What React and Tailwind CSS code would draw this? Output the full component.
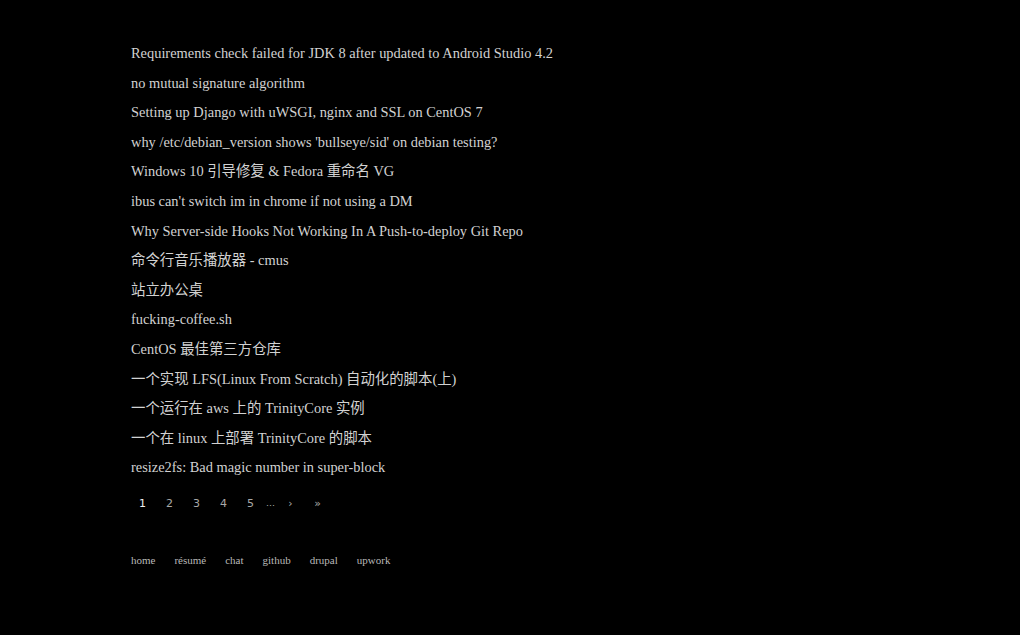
const posts = [
  "Requirements check failed for JDK 8 after updated to Android Studio 4.2",
  "no mutual signature algorithm",
  "Setting up Django with uWSGI, nginx and SSL on CentOS 7",
  "why /etc/debian_version shows 'bullseye/sid' on debian testing?",
  "Windows 10 引导修复 & Fedora 重命名 VG",
  "ibus can't switch im in chrome if not using a DM",
  "Why Server-side Hooks Not Working In A Push-to-deploy Git Repo",
  "命令行音乐播放器 - cmus",
  "站立办公桌",
  "fucking-coffee.sh",
  "CentOS 最佳第三方仓库",
  "一个实现 LFS(Linux From Scratch) 自动化的脚本(上)",
  "一个运行在 aws 上的 TrinityCore 实例",
  "一个在 linux 上部署 TrinityCore 的脚本",
  "resize2fs: Bad magic number in super-block",
];

const links = ["home", "résumé", "chat", "github", "drupal", "upwork"];

export default function App() {
  return (
    <div className="min-h-[635px] w-full bg-black pl-[131px] pt-[39px] font-['Liberation_Serif','Noto_Sans_CJK_SC',serif]">
      <ul className="flex flex-col">
        {posts.map((p) => (
          <li key={p} className="h-[29.6px] leading-[29.6px] text-[14.4px] text-[#d2d2d2] whitespace-nowrap">
            <a href="#">{p}</a>
          </li>
        ))}
      </ul>

      <div className="-ml-[2px] mt-[6px] flex h-[30px] items-center text-[11px] font-['DejaVu_Sans',sans-serif] text-[#a8a8a8]">
        <span className="w-[27px] text-center text-[#f0f0f0]">1</span>
        <span className="w-[27px] text-center">2</span>
        <span className="w-[27px] text-center">3</span>
        <span className="w-[27px] text-center">4</span>
        <span className="w-[27px] text-center">5</span>
        <span className="w-[13px] text-center text-[9px]">…</span>
        <span className="w-[27px] text-center">›</span>
        <span className="w-[27px] text-center">»</span>
      </div>

      <nav className="mt-[34px] flex gap-[19px] text-[11px] text-[#b8b8b8] leading-[14px]">
        {links.map((l) => (
          <a key={l} href="#">
            {l}
          </a>
        ))}
      </nav>
    </div>
  );
}
